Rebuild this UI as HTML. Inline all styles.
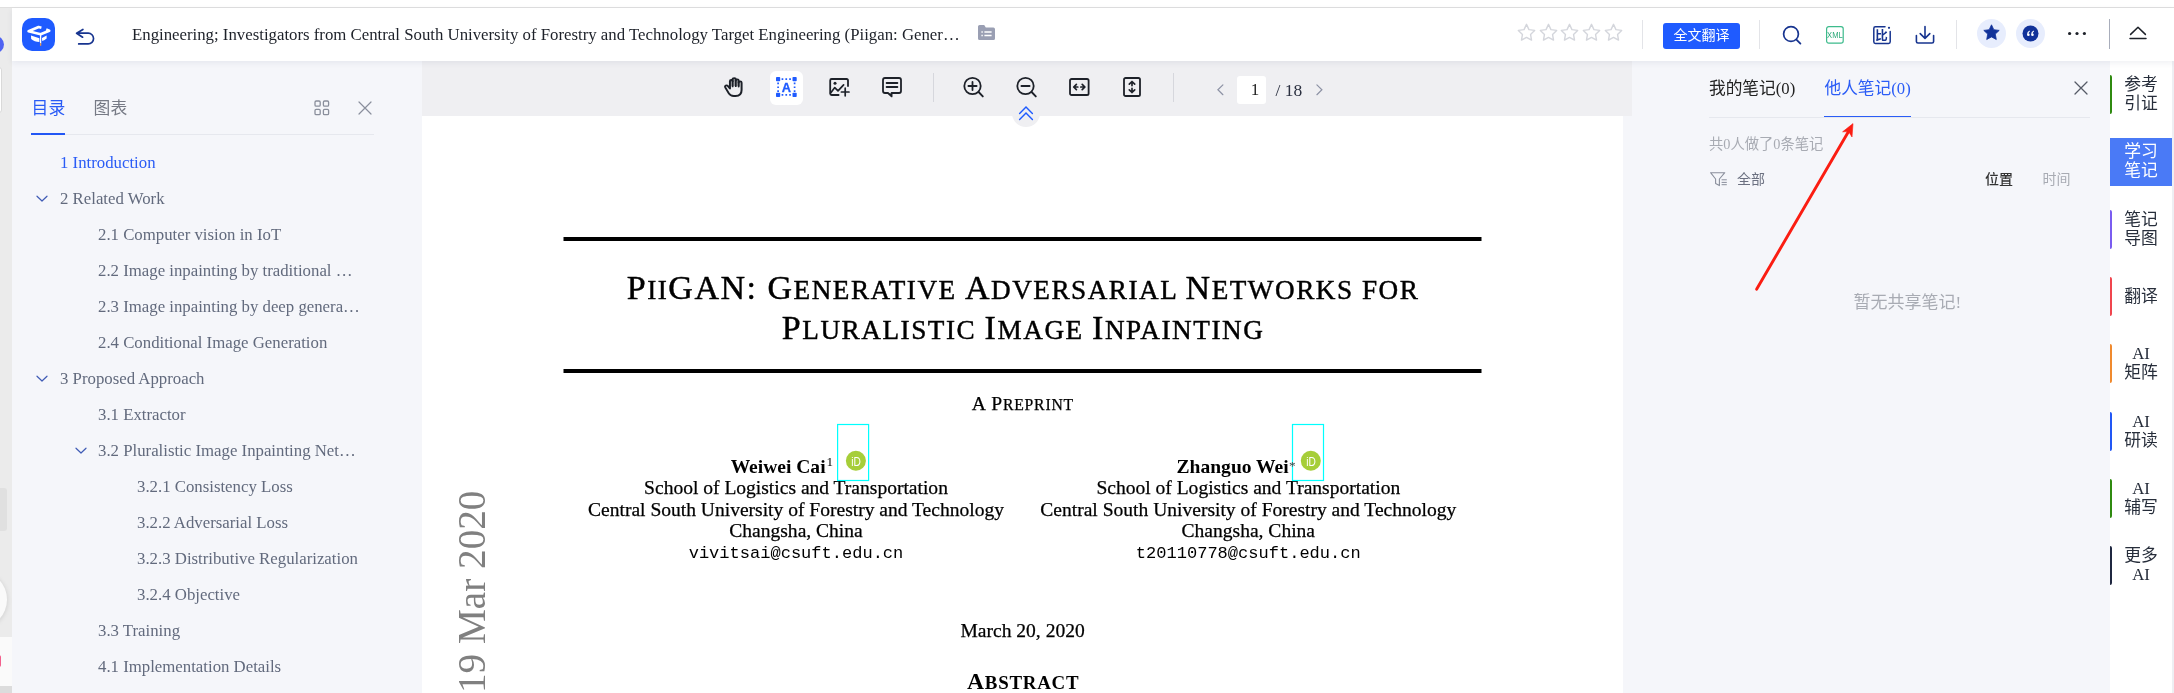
<!DOCTYPE html>
<html lang="zh-CN">
<head>
<meta charset="utf-8">
<title>PiiGAN reader</title>
<style>
*{box-sizing:border-box;margin:0;padding:0}
html,body{width:2174px;height:693px;overflow:hidden;background:#fff}
body{position:relative;font-family:"Liberation Serif","Noto Sans CJK SC",serif;color:#333}
.abs{position:absolute}
#topbar,#side,#tool,#page,#rpanel,#rbar{will-change:transform}
svg{display:block;overflow:visible}
/* frames */
#topline{left:0;top:7px;width:2174px;height:1px;background:#dfdfdf}
#lstrip{left:0;top:8px;width:12px;height:685px;background:#ebebeb;overflow:hidden}
#topbar{left:12px;top:8px;width:2162px;height:53px;background:#fff;box-shadow:0 2px 6px rgba(30,40,80,.07);z-index:5}
#side{left:12px;top:61px;width:410px;height:632px;background:#f5f6fa}
#tool{left:422px;top:61px;width:1210px;height:55px;background:#efeff2;z-index:2}
#page{left:422px;top:116px;width:1201px;height:577px;background:#fff;overflow:hidden}
#rpanel{left:1623px;top:61px;width:487px;height:632px;background:#f5f6fa}
#rbar{left:2110px;top:61px;width:62px;height:632px;background:#fff}
#redge{left:2172px;top:61px;width:2px;height:632px;background:#eeeff3}
/* topbar */
#title{left:120px;top:16px;font-size:16.8px;line-height:22px;color:#1d2129;white-space:nowrap}
/* toc */
.tab{font-size:16.8px;line-height:22px;white-space:nowrap}
.toc{font-size:16.8px;line-height:22px;color:#626a7d;margin-top:1px;white-space:nowrap}
.rb{left:0;width:62px;text-align:center;font-size:16.8px;line-height:19px;white-space:nowrap}
</style>
</head>
<body>
<div id="topline" class="abs"></div>
<div id="lstrip" class="abs">
  <div class="abs" style="left:-13px;top:28px;width:17px;height:17px;border-radius:50%;background:#4f63f2"></div>
  <div class="abs" style="left:-6px;top:59px;width:8px;height:46px;border-radius:3px;background:#fff;border:1px solid #d9d9d9"></div>
  <div class="abs" style="left:0;top:480px;width:7px;height:43px;border-radius:0 3px 3px 0;background:#e0e0e0"></div>
  <div class="abs" style="left:-49.9px;top:563px;width:56.6px;height:56.6px;border-radius:50%;background:#fafafa;box-shadow:0 1px 5px rgba(0,0,0,.13)"></div>
  <div class="abs" style="left:0;top:629px;width:12px;height:49px;background:#fafafa"></div>
  <div class="abs" style="left:0;top:678px;width:12px;height:8px;background:#dcdcdc"></div>
  <div class="abs" style="left:-3px;top:647px;width:4px;height:12px;border-radius:2px;background:#f2608c"></div>
</div>

<div id="topbar" class="abs">
  <!-- logo -->
  <div class="abs" style="left:10px;top:10px;width:33px;height:33px;border-radius:10px;background:#1f5bff">
    <svg width="33" height="33" viewBox="0 0 33 33">
      <path d="M19.4 9.7 L16.6 9 L6.6 13.3 L18.6 16.3 L27.2 12.7 L24.2 11.6" fill="none" stroke="#fff" stroke-width="2.7" stroke-linejoin="round" stroke-linecap="butt"/>
      <path d="M9 17.4 L17.4 20.3 L17.4 23.9 Q12.4 23.9 9.2 20.9 Z" fill="#fff"/>
      <path d="M20 19.9 L24.6 17.5 L24.6 20.5 Q22.8 22.4 20.2 22.9 Z" fill="#fff"/>
      <path d="M18.6 16.8 L18.6 25.4" stroke="#fff" stroke-width="1.3" fill="none"/>
      <path d="M18.6 25.2 L18.6 27.8" stroke="#e8964a" stroke-width="1.3" fill="none"/>
    </svg>
  </div>
  <!-- back arrow -->
  <svg class="abs" style="left:63px;top:20px" width="20" height="18" viewBox="0 0 20 18">
    <path d="M7.9 1.4 L1.6 5.2 L7.6 9.2 M1.8 5.2 L13.2 5.2 A5.35 5.35 0 0 1 13.2 15.9 L3.7 15.9" fill="none" stroke="#17348f" stroke-width="1.7" stroke-linecap="round" stroke-linejoin="round"/>
  </svg>
  <div id="title" class="abs">Engineering; Investigators from Central South University of Forestry and Technology Target Engineering (Piigan: Gener…</div>
  <!-- folder icon : abs x 978-995 y 25-40 -->
  <svg class="abs" style="left:966px;top:17px" width="17" height="15" viewBox="0 0 17 15">
    <path d="M1.6 0 H6.2 L7.8 2.6 H15.4 Q17 2.6 17 4.2 V13.4 Q17 15 15.4 15 H1.6 Q0 15 0 13.4 V1.6 Q0 0 1.6 0 Z" fill="#9a9fb3"/>
    <path d="M3.4 7 H4.8 M6.4 7 H13.6 M3.4 10.6 H4.8 M6.4 10.6 H13.6" stroke="#fff" stroke-width="1.5"/>
  </svg>
  <svg class="abs" style="left:1505.0px;top:14.6px" width="19" height="19" viewBox="0 0 17 17"><path d="M8.5 1.2 L10.7 5.9 L15.8 6.6 L12.1 10.2 L13 15.3 L8.5 12.9 L4 15.3 L4.9 10.2 L1.2 6.6 L6.3 5.9 Z" fill="none" stroke="#d4d6dc" stroke-width="1.25" stroke-linejoin="round"/></svg><svg class="abs" style="left:1526.7px;top:14.6px" width="19" height="19" viewBox="0 0 17 17"><path d="M8.5 1.2 L10.7 5.9 L15.8 6.6 L12.1 10.2 L13 15.3 L8.5 12.9 L4 15.3 L4.9 10.2 L1.2 6.6 L6.3 5.9 Z" fill="none" stroke="#d4d6dc" stroke-width="1.25" stroke-linejoin="round"/></svg><svg class="abs" style="left:1548.4px;top:14.6px" width="19" height="19" viewBox="0 0 17 17"><path d="M8.5 1.2 L10.7 5.9 L15.8 6.6 L12.1 10.2 L13 15.3 L8.5 12.9 L4 15.3 L4.9 10.2 L1.2 6.6 L6.3 5.9 Z" fill="none" stroke="#d4d6dc" stroke-width="1.25" stroke-linejoin="round"/></svg><svg class="abs" style="left:1570.1px;top:14.6px" width="19" height="19" viewBox="0 0 17 17"><path d="M8.5 1.2 L10.7 5.9 L15.8 6.6 L12.1 10.2 L13 15.3 L8.5 12.9 L4 15.3 L4.9 10.2 L1.2 6.6 L6.3 5.9 Z" fill="none" stroke="#d4d6dc" stroke-width="1.25" stroke-linejoin="round"/></svg><svg class="abs" style="left:1591.8px;top:14.6px" width="19" height="19" viewBox="0 0 17 17"><path d="M8.5 1.2 L10.7 5.9 L15.8 6.6 L12.1 10.2 L13 15.3 L8.5 12.9 L4 15.3 L4.9 10.2 L1.2 6.6 L6.3 5.9 Z" fill="none" stroke="#d4d6dc" stroke-width="1.25" stroke-linejoin="round"/></svg>
  <div class="abs" style="left:1630px;top:12px;width:1px;height:29px;background:#e3e4e8"></div>
  <div class="abs" style="left:1651px;top:15px;width:77px;height:26px;border-radius:3px;background:#1f5bff;color:#fff;font-size:14px;line-height:24px;text-align:center;font-family:'Liberation Sans','Noto Sans CJK SC',sans-serif">全文翻译</div>
  <div class="abs" style="left:1747px;top:12px;width:1px;height:29px;background:#e3e4e8"></div>
  <!-- search : abs x 1783-1801 y 26-44 -->
  <svg class="abs" style="left:1770px;top:17px" width="20" height="20" viewBox="0 0 20 20">
    <circle cx="9" cy="9" r="7.4" fill="none" stroke="#17348f" stroke-width="1.7"/>
    <path d="M14.4 14.6 L18.4 18.6" stroke="#17348f" stroke-width="1.8" stroke-linecap="round"/>
  </svg>
  <!-- xml : abs x 1826-1844 y 26-44 -->
  <svg class="abs" style="left:1813px;top:17px" width="20" height="20" viewBox="0 0 20 20">
    <rect x="1.6" y="1.6" width="16.6" height="16.6" rx="2.2" fill="none" stroke="#3dbb8c" stroke-width="1.2"/>
    <text x="9.9" y="12.9" text-anchor="middle" font-family="Liberation Sans, sans-serif" font-size="8.4" fill="#2faa7b" textLength="15.6" lengthAdjust="spacingAndGlyphs">XML</text>
  </svg>
  <!-- compare : abs x 1873-1892 y 26-44 -->
  <svg class="abs" style="left:1860px;top:17px" width="20" height="20" viewBox="0 0 20 20">
    <path d="M13 1.8 H3.4 Q1.8 1.8 1.8 3.4 V16.8 Q1.8 18.4 3.4 18.4 H16.6 Q18.2 18.4 18.2 16.8 V6.6" fill="none" stroke="#17348f" stroke-width="1.5" stroke-linecap="round"/>
    <circle cx="17" cy="2.8" r="1.1" fill="#17348f"/>
    <text x="9.6" y="14.6" text-anchor="middle" font-family="Noto Sans CJK SC, sans-serif" font-size="12.5" font-weight="bold" fill="#17348f">比</text>
  </svg>
  <!-- download : abs x 1915.5-1934 y 26-44 -->
  <svg class="abs" style="left:1903px;top:17px" width="20" height="20" viewBox="0 0 20 20">
    <path d="M1.4 10.6 V16.4 Q1.4 18 3 18 H17 Q18.6 18 18.6 16.4 V10.6" fill="none" stroke="#17348f" stroke-width="1.6" stroke-linecap="round"/>
    <path d="M10 1.6 V13.2 M5.2 8.6 L10 13.4 L14.8 8.6" fill="none" stroke="#17348f" stroke-width="1.6" stroke-linecap="round" stroke-linejoin="round"/>
  </svg>
  <div class="abs" style="left:1944px;top:12px;width:1px;height:29px;background:#e3e4e8"></div>
  <!-- star circle : centre abs 1991.4,33.5 r 14.6 -->
  <div class="abs" style="left:1965px;top:11px;width:29px;height:29px;border-radius:50%;background:#e7edfd"></div>
  <svg class="abs" style="left:1971px;top:16px" width="17" height="17" viewBox="0 0 17 17"><path d="M8.5 .8 L10.8 5.7 L16.2 6.4 L12.3 10.1 L13.3 15.5 L8.5 12.9 L3.7 15.5 L4.7 10.1 L.8 6.4 L6.2 5.7 Z" fill="#11329a" stroke="#11329a" stroke-width=".8" stroke-linejoin="round"/></svg>
  <!-- quote circle : centre abs 2030.3,33.5 -->
  <div class="abs" style="left:2004px;top:11px;width:29px;height:29px;border-radius:50%;background:#e7edfd"></div>
  <svg class="abs" style="left:2010px;top:17px" width="17" height="17" viewBox="0 0 17 17"><circle cx="8.5" cy="8.5" r="8" fill="#11329a"/>
    <path d="M7.6 5.6 Q5 6.6 5 9.4 Q5 11 6.4 11 Q7.7 11 7.7 9.7 Q7.7 8.6 6.5 8.5 Q6.6 7.2 7.9 6.4 Z M11.7 5.6 Q9.1 6.6 9.1 9.4 Q9.1 11 10.5 11 Q11.8 11 11.8 9.7 Q11.8 8.6 10.6 8.5 Q10.7 7.2 12 6.4 Z" fill="#fff"/></svg>
  <!-- dots : abs x 2068-2086 y 33 -->
  <svg class="abs" style="left:2055px;top:23px" width="20" height="5" viewBox="0 0 20 5"><circle cx="2.6" cy="2.5" r="1.6" fill="#1d2129"/><circle cx="10" cy="2.5" r="1.6" fill="#1d2129"/><circle cx="17.4" cy="2.5" r="1.6" fill="#1d2129"/></svg>
  <div class="abs" style="left:2097px;top:11px;width:1px;height:30px;background:#a8adbb"></div>
  <!-- collapse : abs x 2130-2146 y 26.4-39 -->
  <svg class="abs" style="left:2117px;top:18px" width="18" height="14" viewBox="0 0 18 14"><path d="M1.6 8.4 L9 1.2 L16.4 8.4" fill="none" stroke="#1d2129" stroke-width="1.5" stroke-linecap="round" stroke-linejoin="round"/><path d="M1 12.6 H17" stroke="#1d2129" stroke-width="1.5" stroke-linecap="round"/></svg>
</div>

<div id="side" class="abs">
  <div class="abs tab" style="left:19.6px;top:36.5px;color:#2a5cf6">目录</div>
  <div class="abs tab" style="left:81.6px;top:36.5px;color:#767a85">图表</div>
  <div class="abs" style="left:19px;top:73px;width:343px;height:1px;background:#e6e8ee"></div>
  <div class="abs" style="left:19px;top:72px;width:34px;height:2px;background:#2257f5"></div>
  <svg class="abs" style="left:302px;top:39px" width="16" height="16" viewBox="0 0 16 16"><g fill="none" stroke="#8a8f9c" stroke-width="1.3"><rect x="1" y="1" width="5.2" height="5.2" rx="1.2"/><rect x="9.4" y="1" width="5.2" height="5.2" rx="1.2"/><rect x="1" y="9.4" width="5.2" height="5.2" rx="1.2"/><rect x="9.4" y="9.4" width="5.2" height="5.2" rx="1.2"/></g></svg>
  <svg class="abs" style="left:346px;top:40px" width="14" height="14" viewBox="0 0 14 14"><path d="M1 1 L13 13 M13 1 L1 13" stroke="#8a8f9c" stroke-width="1.2" stroke-linecap="round"/></svg>
  <div class="abs toc" style="left:48px;top:90px;color:#2a5cf6">1 Introduction</div>
  <div class="abs toc" style="left:48px;top:126px">2 Related Work</div>
  <svg class="abs" style="left:24px;top:133px" width="12" height="8" viewBox="0 0 12 8"><path d="M1 2.2 L6 7 L11 2.2" fill="none" stroke="#3f5bb5" stroke-width="1.2" stroke-linecap="round" stroke-linejoin="round"/></svg>
  <div class="abs toc" style="left:86px;top:162px">2.1 Computer vision in IoT</div>
  <div class="abs toc" style="left:86px;top:198px">2.2 Image inpainting by traditional …</div>
  <div class="abs toc" style="left:86px;top:234px">2.3 Image inpainting by deep genera…</div>
  <div class="abs toc" style="left:86px;top:270px">2.4 Conditional Image Generation</div>
  <div class="abs toc" style="left:48px;top:306px">3 Proposed Approach</div>
  <svg class="abs" style="left:24px;top:313px" width="12" height="8" viewBox="0 0 12 8"><path d="M1 2.2 L6 7 L11 2.2" fill="none" stroke="#3f5bb5" stroke-width="1.2" stroke-linecap="round" stroke-linejoin="round"/></svg>
  <div class="abs toc" style="left:86px;top:342px">3.1 Extractor</div>
  <div class="abs toc" style="left:86px;top:378px">3.2 Pluralistic Image Inpainting Net…</div>
  <svg class="abs" style="left:63px;top:385px" width="12" height="8" viewBox="0 0 12 8"><path d="M1 2.2 L6 7 L11 2.2" fill="none" stroke="#3f5bb5" stroke-width="1.2" stroke-linecap="round" stroke-linejoin="round"/></svg>
  <div class="abs toc" style="left:125px;top:414px">3.2.1 Consistency Loss</div>
  <div class="abs toc" style="left:125px;top:450px">3.2.2 Adversarial Loss</div>
  <div class="abs toc" style="left:125px;top:486px">3.2.3 Distributive Regularization</div>
  <div class="abs toc" style="left:125px;top:522px">3.2.4 Objective</div>
  <div class="abs toc" style="left:86px;top:558px">3.3 Training</div>
  <div class="abs toc" style="left:86px;top:594px">4.1 Implementation Details</div>
</div>

<div id="tool" class="abs">
  <!-- hand : abs x 724-743 y 77-97 -->
  <svg class="abs" style="left:301.3px;top:16px" width="22.4" height="20" viewBox="0 0 20 20" preserveAspectRatio="none">
    <path d="M6.2 11.6 L6.2 4.2 Q6.2 2.9 7.4 2.9 Q8.6 2.9 8.6 4.2 L8.6 2.6 Q8.6 1.1 10 1.1 Q11.4 1.1 11.4 2.6 L11.4 3.6 Q11.4 2.4 12.7 2.4 Q14 2.4 14 3.8 L14 5.4 Q14 4.3 15.3 4.3 Q16.6 4.3 16.6 5.7 L16.6 13 Q16.6 19 11.2 19 L9.6 19 Q6.6 19 5.2 16.4 L2 10.4 Q1.4 9.1 2.5 8.5 Q3.6 8 4.5 9.2 Z" fill="none" stroke="#1d2129" stroke-width="1.8" stroke-linejoin="round"/>
    <path d="M8.6 4 L8.6 9.4 M11.4 3.4 L11.4 9.2 M14 5.2 L14 9.6" stroke="#1d2129" stroke-width="1.7" stroke-linecap="round" fill="none"/>
    <path d="M7.4 3.6 L10 2 L12.7 3.2 L15.2 5 L15.2 9 L7.4 9 Z" fill="#1d2129" opacity=".28"/>
  </svg>
  <!-- selected text-select -->
  <div class="abs" style="left:348px;top:10px;width:33px;height:34px;border-radius:6px;background:#fff"></div>
  <svg class="abs" style="left:354px;top:16px" width="21" height="20" viewBox="0 0 21 20">
    <g fill="#1f5bff"><rect x="0" y="0" width="4.2" height="4.2" rx=".8"/><rect x="16.5" y="0" width="4.2" height="4.2" rx=".8"/><rect x="0" y="15.8" width="4.2" height="4.2" rx=".8"/><rect x="16.5" y="15.8" width="4.2" height="4.2" rx=".8"/></g>
    <g stroke="#1f5bff" stroke-width="1.7" stroke-dasharray="1.7 2.1" fill="none"><path d="M5.6 2.1 H16 M5.6 17.9 H16"/><path d="M2.1 5.6 V15.5 M18.6 5.6 V15.5"/></g>
    <text x="10.4" y="14.7" text-anchor="middle" font-family="Liberation Sans, sans-serif" font-weight="bold" font-size="12.8" fill="#1f5bff" stroke="#1f5bff" stroke-width=".3">A</text>
  </svg>
  <!-- image plus : abs x 829-849 y 78-96 -->
  <svg class="abs" style="left:407px;top:17px" width="21" height="18" viewBox="0 0 21 18">
    <path d="M19 8 L19 2.4 Q19 1 17.6 1 L2.6 1 Q1.2 1 1.2 2.4 L1.2 15.6 Q1.2 17 2.6 17 L9.6 17" fill="none" stroke="#1d2129" stroke-width="1.8" stroke-linecap="round"/>
    <path d="M1.6 15 L5.8 9.6 L9 12.8 L14.6 6.8" fill="none" stroke="#1d2129" stroke-width="1.7" stroke-linecap="round" stroke-linejoin="round"/>
    <circle cx="6" cy="5.2" r="1.5" fill="#1d2129"/>
    <path d="M12.4 14 H20 M16.2 10.2 V17.8" fill="none" stroke="#1d2129" stroke-width="1.7" stroke-linecap="round"/>
  </svg>
  <!-- comment : abs x 882-902 y 77-97 -->
  <svg class="abs" style="left:460px;top:16px" width="20" height="20" viewBox="0 0 20 20">
    <path d="M3 1 H17 Q19 1 19 3 V14 Q19 16 17 16 H9.6 L9.6 19.4 L6 16 H3 Q1 16 1 14 V3 Q1 1 3 1 Z" fill="none" stroke="#1d2129" stroke-width="1.8" stroke-linejoin="round"/>
    <path d="M7 16.6 L9.4 19 L9.4 16.6 Z" fill="#1d2129"/>
    <path d="M4.6 6 H15.4 M4.6 10 H15.4" stroke="#1d2129" stroke-width="1.8" stroke-linecap="round"/>
  </svg>
  <div class="abs" style="left:511px;top:12px;width:1px;height:29px;background:#d6d7dd"></div>
  <!-- zoom in -->
  <svg class="abs" style="left:541px;top:16px" width="21" height="21" viewBox="0 0 21 21">
    <circle cx="9.5" cy="9" r="8.2" fill="none" stroke="#1d2129" stroke-width="1.8"/>
    <path d="M5.4 9 H13.6 M9.5 4.9 V13.1" stroke="#1d2129" stroke-width="1.8" stroke-linecap="round"/>
    <path d="M15.6 15 L19.8 19.4" stroke="#1d2129" stroke-width="1.9" stroke-linecap="round"/>
  </svg>
  <!-- zoom out -->
  <svg class="abs" style="left:594px;top:16px" width="21" height="21" viewBox="0 0 21 21">
    <circle cx="9.5" cy="9" r="8.2" fill="none" stroke="#1d2129" stroke-width="1.8"/>
    <path d="M5.4 9 H13.6" stroke="#1d2129" stroke-width="1.8" stroke-linecap="round"/>
    <path d="M15.6 15 L19.8 19.4" stroke="#1d2129" stroke-width="1.9" stroke-linecap="round"/>
  </svg>
  <!-- fit width : abs x 1069.5-1089.6 y 78.6-96 -->
  <svg class="abs" style="left:647px;top:17px" width="21" height="18" viewBox="0 0 21 18">
    <rect x="1" y="1" width="18.6" height="16" rx="1.6" fill="none" stroke="#1d2129" stroke-width="1.8"/>
    <path d="M4.8 9 H8.8 M11.8 9 H15.8 M7.4 6.3 L4.7 9 L7.4 11.7 M13.2 6.3 L15.9 9 L13.2 11.7" fill="none" stroke="#1d2129" stroke-width="1.7" stroke-linecap="round" stroke-linejoin="round"/>
  </svg>
  <!-- fit height : abs x 1123-1141 y 77.3-96.7 -->
  <svg class="abs" style="left:701px;top:16px" width="18" height="20" viewBox="0 0 18 20">
    <rect x="1" y="1" width="16" height="18" rx="1.6" fill="none" stroke="#1d2129" stroke-width="1.8"/>
    <path d="M9 4.6 V8.6 M9 11.4 V15.4 M6.3 7.2 L9 4.5 L11.7 7.2 M6.3 12.8 L9 15.5 L11.7 12.8" fill="none" stroke="#1d2129" stroke-width="1.7" stroke-linecap="round" stroke-linejoin="round"/>
  </svg>
  <div class="abs" style="left:751px;top:12px;width:1px;height:29px;background:#d6d7dd"></div>
  <!-- pager -->
  <svg class="abs" style="left:794.6px;top:23px" width="8" height="12" viewBox="0 0 8 12"><path d="M5.9 .9 L.9 5.8 L5.9 10.7" fill="none" stroke="#8d92a5" stroke-width="1.2" stroke-linecap="round" stroke-linejoin="miter"/></svg>
  <div class="abs" style="left:815px;top:15px;width:29px;height:28px;border-radius:3px;background:#fff;text-align:center;font-size:17px;line-height:28px;color:#222;padding-left:7px">1</div>
  <div class="abs" style="left:853.5px;top:14.8px;font-size:17.5px;line-height:28px;color:#2b3040;white-space:nowrap">/ 18</div>
  <svg class="abs" style="left:893.6px;top:23px" width="8" height="12" viewBox="0 0 8 12"><path d="M.9 .9 L5.9 5.8 L.9 10.7" fill="none" stroke="#8d92a5" stroke-width="1.2" stroke-linecap="round" stroke-linejoin="miter"/></svg>
  <!-- collapse bubble -->
  <div class="abs" style="left:590.3px;top:37.5px;width:28px;height:28px;border-radius:50%;background:#efeff2"></div>
  <svg class="abs" style="left:597.4px;top:45.1px" width="14" height="15" viewBox="0 0 14 15"><path d="M.6 7.5 L7 1 L13.4 7.5 M.6 13.5 L7 7 L13.4 13.5" fill="none" stroke="#1f5bff" stroke-width="1.4" stroke-linecap="round" stroke-linejoin="miter"/></svg>
</div>
<div id="page" class="abs"><svg width="1201" height="577" viewBox="0 0 1201 577" font-family="Liberation Serif, serif" fill="#000">
<rect x="141.5" y="121" width="918" height="4" fill="#000"/>
<rect x="141.5" y="253" width="918" height="4" fill="#000"/>
<text x="600.3" y="183" text-anchor="middle" font-size="34" textLength="791" lengthAdjust="spacing" stroke="#000" stroke-width=".45">P<tspan font-size="27.2">II</tspan>GAN: G<tspan font-size="27.2">ENERATIVE </tspan>A<tspan font-size="27.2">DVERSARIAL </tspan>N<tspan font-size="27.2">ETWORKS FOR</tspan></text>
<text x="600.3" y="223" text-anchor="middle" font-size="34" textLength="481" lengthAdjust="spacing" stroke="#000" stroke-width=".45">P<tspan font-size="27.2">LURALISTIC </tspan>I<tspan font-size="27.2">MAGE </tspan>I<tspan font-size="27.2">NPAINTING</tspan></text>
<text x="600.4" y="293.5" text-anchor="middle" font-size="19.6" textLength="101.5" lengthAdjust="spacing" stroke="#000" stroke-width=".25">A P<tspan font-size="15.7">REPRINT</tspan></text>
<text x="356.1" y="357" text-anchor="middle" font-size="19.55" font-weight="bold">Weiwei Cai</text>
<text x="374" y="378" text-anchor="middle" font-size="19.55" stroke="#000" stroke-width=".25">School of Logistics and Transportation</text>
<text x="374" y="399.6" text-anchor="middle" font-size="19.55" stroke="#000" stroke-width=".25">Central South University of Forestry and Technology</text>
<text x="374" y="421.20000000000005" text-anchor="middle" font-size="19.55" stroke="#000" stroke-width=".25">Changsha, China</text>
<text x="374" y="441.6" text-anchor="middle" font-size="17.05" font-family="Liberation Mono, monospace">vivitsai@csuft.edu.cn</text>
<rect x="415.6" y="308.5" width="31" height="56" fill="none" stroke="#00ffff" stroke-width="1.2"/>
<circle cx="433.9" cy="344.8" r="10" fill="#a6ce39"/>
<text x="429.3" y="349.6" font-size="13.2" textLength="9.6" lengthAdjust="spacingAndGlyphs" font-family="Liberation Sans, sans-serif" fill="#fff">iD</text>
<text x="810.6" y="357" text-anchor="middle" font-size="19.55" font-weight="bold">Zhanguo Wei</text>
<text x="826.3" y="378" text-anchor="middle" font-size="19.55" stroke="#000" stroke-width=".25">School of Logistics and Transportation</text>
<text x="826.3" y="399.6" text-anchor="middle" font-size="19.55" stroke="#000" stroke-width=".25">Central South University of Forestry and Technology</text>
<text x="826.3" y="421.20000000000005" text-anchor="middle" font-size="19.55" stroke="#000" stroke-width=".25">Changsha, China</text>
<text x="826.3" y="441.6" text-anchor="middle" font-size="17.05" font-family="Liberation Mono, monospace">t20110778@csuft.edu.cn</text>
<rect x="870.5" y="308.5" width="31" height="56" fill="none" stroke="#00ffff" stroke-width="1.2"/>
<circle cx="888.8" cy="344.8" r="10" fill="#a6ce39"/>
<text x="884.2" y="349.6" font-size="13.2" textLength="9.6" lengthAdjust="spacingAndGlyphs" font-family="Liberation Sans, sans-serif" fill="#fff">iD</text>
<text x="404.6" y="349.8" font-size="13.2">1</text>
<text x="867.0" y="353.6" font-size="13.2" fill="#444">*</text>
<text x="600.6" y="521" text-anchor="middle" font-size="19.55" stroke="#000" stroke-width=".25">March 20, 2020</text>
<text x="600.8" y="572.5" text-anchor="middle" font-size="23.6" font-weight="bold" textLength="111.5" lengthAdjust="spacing">A<tspan font-size="18.9">BSTRACT</tspan></text>
<text transform="translate(63.39999999999998,577) rotate(-90)" x="0" y="0" font-size="39.2" fill="#808080">19 Mar 2020</text>
</svg></div>
<div id="rpanel" class="abs">
  <div class="abs" style="left:86px;top:15.6px;font-size:16.7px;line-height:24px;color:#222;white-space:nowrap">我的笔记(0)</div>
  <div class="abs" style="left:201.5px;top:15.6px;font-size:16.7px;line-height:24px;color:#2a5cf6;white-space:nowrap">他人笔记(0)</div>
  <svg class="abs" style="left:451px;top:20px" width="14" height="14" viewBox="0 0 14 14"><path d="M1 1 L13 13 M13 1 L1 13" stroke="#555a66" stroke-width="1.3" stroke-linecap="round"/></svg>
  <div class="abs" style="left:86px;top:56px;width:381px;height:1px;background:#e6e8ee"></div>
  <div class="abs" style="left:201px;top:55px;width:87px;height:1px;background:#2a5cf6"></div>
  <div class="abs" style="left:86px;top:73px;font-size:14.3px;line-height:20px;color:#a8abb3;white-space:nowrap">共0人做了0条笔记</div>
  <svg class="abs" style="left:87px;top:110.6px" width="18" height="14" viewBox="0 0 18 14">
    <path d="M.6 .7 H14.8 L9.4 7 V13.6 L5.6 11.6 V7 Z" fill="none" stroke="#8a8f9c" stroke-width="1.1" stroke-linejoin="round"/>
    <path d="M11.6 7.8 H16.8 M11.6 10.4 H16.8 M11.6 12.7 H16.8" stroke="#8a8f9c" stroke-width="1"/>
  </svg>
  <div class="abs" style="left:114px;top:109.2px;font-size:14px;line-height:20px;color:#6b7080;white-space:nowrap">全部</div>
  <div class="abs" style="left:362px;top:109.2px;font-size:14px;line-height:20px;color:#333;font-weight:500;white-space:nowrap">位置</div>
  <div class="abs" style="left:419.5px;top:109.2px;font-size:14px;line-height:20px;color:#a8abb3;white-space:nowrap">时间</div>
  <div class="abs" style="left:230.5px;top:229.8px;font-size:17px;line-height:24px;color:#a8abb3;white-space:nowrap">暂无共享笔记!</div>
  <svg class="abs" style="left:0;top:0" width="487" height="632" viewBox="0 0 487 632">
    <path d="M133.6 228.3 L226.4 69.0" stroke="#fb1d12" stroke-width="2.9" stroke-linecap="round" fill="none"/>
    <path d="M230.0 62.6 L229.0 76.0 L225.6 70.6 L219.6 70.8 Z" fill="#fb1d12" stroke="#fb1d12" stroke-width=".6" stroke-linejoin="round"/>
  </svg>
</div>
<div id="rbar" class="abs">
  <div class="abs" style="left:0;top:14.0px;width:2px;height:39px;border-radius:0 2px 2px 0;background:#2f8a10"></div>
  <div class="abs rb" style="top:14.0px;color:#272e3b">参考<br>引证</div>
  <div class="abs" style="left:0;top:77px;width:62px;height:48px;background:#4a7af6"></div>
  <div class="abs rb" style="top:81.3px;color:#fff">学习<br>笔记</div>
  <div class="abs" style="left:0;top:148.6px;width:2px;height:39px;border-radius:0 2px 2px 0;background:#7a5cf0"></div>
  <div class="abs rb" style="top:148.6px;color:#272e3b">笔记<br>导图</div>
  <div class="abs" style="left:0;top:215.9px;width:2px;height:39px;border-radius:0 2px 2px 0;background:#f0454e"></div>
  <div class="abs rb" style="top:225.8px;color:#272e3b">翻译</div>
  <div class="abs" style="left:0;top:283.2px;width:2px;height:39px;border-radius:0 2px 2px 0;background:#f08a2e"></div>
  <div class="abs rb" style="top:283.2px;color:#272e3b">AI<br>矩阵</div>
  <div class="abs" style="left:0;top:350.5px;width:2px;height:39px;border-radius:0 2px 2px 0;background:#2257f5"></div>
  <div class="abs rb" style="top:350.5px;color:#272e3b">AI<br>研读</div>
  <div class="abs" style="left:0;top:417.8px;width:2px;height:39px;border-radius:0 2px 2px 0;background:#2f8a10"></div>
  <div class="abs rb" style="top:417.8px;color:#272e3b">AI<br>辅写</div>
  <div class="abs" style="left:0;top:485.1px;width:2px;height:39px;border-radius:0 2px 2px 0;background:#1f2740"></div>
  <div class="abs rb" style="top:485.1px;color:#272e3b">更多<br>AI</div>
</div>
<div id="redge" class="abs"></div>
</body>
</html>
